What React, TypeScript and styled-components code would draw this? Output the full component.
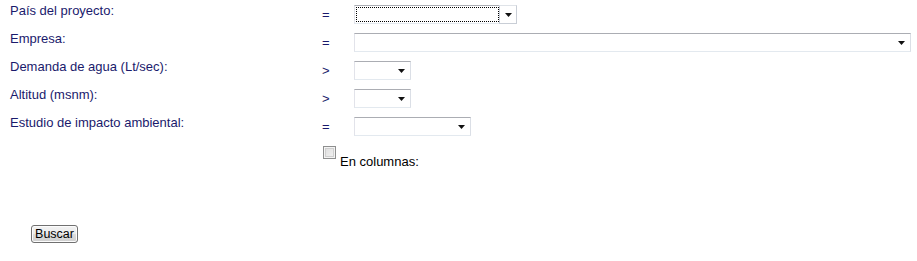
import React, { FC } from "react";
import styled, { createGlobalStyle } from "styled-components";

const GlobalStyle = createGlobalStyle`
  html, body {
    margin: 0;
    padding: 0;
    background: #ffffff;
  }
  body {
    font-family: "Liberation Sans", Arial, sans-serif;
    font-size: 13px;
  }
`;

type Filter = {
  label: string;
  op: string;
  width: number;
  focused?: boolean;
};

const filters: Filter[] = [
  { label: "País del proyecto:", op: "=", width: 163, focused: true },
  { label: "Empresa:", op: "=", width: 557 },
  { label: "Demanda de agua (Lt/sec):", op: ">", width: 57 },
  { label: "Altitud (msnm):", op: ">", width: 57 },
  { label: "Estudio de impacto ambiental:", op: "=", width: 117 },
];

const Arrow: FC = () => (
  <svg width="7" height="4" viewBox="0 0 7 4">
    <path d="M0 0 H7 L3.5 4 Z" fill="#111" />
  </svg>
);

const Dropdown: FC<{ width: number; focused?: boolean }> = ({ width, focused }) => (
  <SelectBox $width={width}>
    <SelectValue $focused={focused} />
    <ArrowButton $boxed={focused}>
      <Arrow />
    </ArrowButton>
  </SelectBox>
);

const App: FC = () => {
  return (
    <Page>
      <GlobalStyle />
      <FilterGrid>
        {filters.map((f) => (
          <React.Fragment key={f.label}>
            <Label>{f.label}</Label>
            <Operator>{f.op}</Operator>
            <Field>
              <Dropdown width={f.width} focused={f.focused} />
            </Field>
          </React.Fragment>
        ))}
        <CheckRow>
          <CheckBox />
          <CheckLabel>En columnas:</CheckLabel>
        </CheckRow>
      </FilterGrid>
      <Actions>
        <Button type="button">Buscar</Button>
      </Actions>
    </Page>
  );
};

const Page = styled.div`
  width: 917px;
  height: 261px;
  box-sizing: border-box;
  padding-left: 10px;
`;

const FilterGrid = styled.div`
  display: grid;
  grid-template-columns: 312px 32px 1fr;
  grid-auto-rows: 28px;
  align-items: start;
`;

const Label = styled.div`
  padding-top: 3px;
  line-height: 15px;
  color: #1a1a6c;
`;

const Operator = styled.div`
  padding-top: 7px;
  line-height: 15px;
  color: #1a1a6c;
`;

const Field = styled.div`
  padding-top: 5px;
`;

const SelectBox = styled.div<{ $width: number }>`
  width: ${(p) => p.$width}px;
  height: 19px;
  box-sizing: border-box;
  display: flex;
  background: #ffffff;
  border: 1px solid;
  border-color: #abadb3 #dbdfe6 #e3e9ef #e2e3ea;
`;

const SelectValue = styled.div<{ $focused?: boolean }>`
  flex: 1;
  margin: 1px 0 1px 1px;
  border: 1px ${(p) => (p.$focused ? "dotted #000" : "solid transparent")};
`;

const ArrowButton = styled.div<{ $boxed?: boolean }>`
  width: 17px;
  display: flex;
  align-items: center;
  justify-content: center;
  box-sizing: border-box;
  border: 1px solid ${(p) => (p.$boxed ? "#c9ced6" : "transparent")};
  border-top-color: ${(p) => (p.$boxed ? "#dfe3e8" : "transparent")};
  margin: ${(p) => (p.$boxed ? "-1px -1px -1px 0" : "0")};
  width: ${(p) => (p.$boxed ? "18px" : "17px")};
  padding-top: 1px;
`;

const CheckRow = styled.div`
  grid-column: 2 / span 2;
  display: flex;
  align-items: flex-start;
  padding-top: 6px;
`;

const CheckBox = styled.span`
  width: 13px;
  height: 13px;
  margin-left: 1px;
  box-sizing: border-box;
  border: 1px solid #8e8f8f;
  background: linear-gradient(135deg, #dcdcdc 0%, #f4f4f4 100%);
  box-shadow: inset 0 0 0 1px #f4f4f4, inset 0 0 0 2px #cfcfcf;
`;

const CheckLabel = styled.span`
  margin-left: 4px;
  margin-top: 8px;
  line-height: 15px;
  color: #000;
`;

const Actions = styled.div`
  padding-left: 21px;
  margin-top: 57px;
`;

const Button = styled.button`
  width: 47px;
  height: 18px;
  padding: 0;
  font-family: "Liberation Sans", Arial, sans-serif;
  font-size: 12.5px;
  line-height: 14px;
  color: #000;
  border: 1px solid #707070;
  border-radius: 3px;
  background: linear-gradient(#f2f2f2 0%, #ebebeb 50%, #dddddd 50%, #cfcfcf 100%);
  box-shadow: inset 0 0 0 1px #fcfcfc;
`;

export default App;
